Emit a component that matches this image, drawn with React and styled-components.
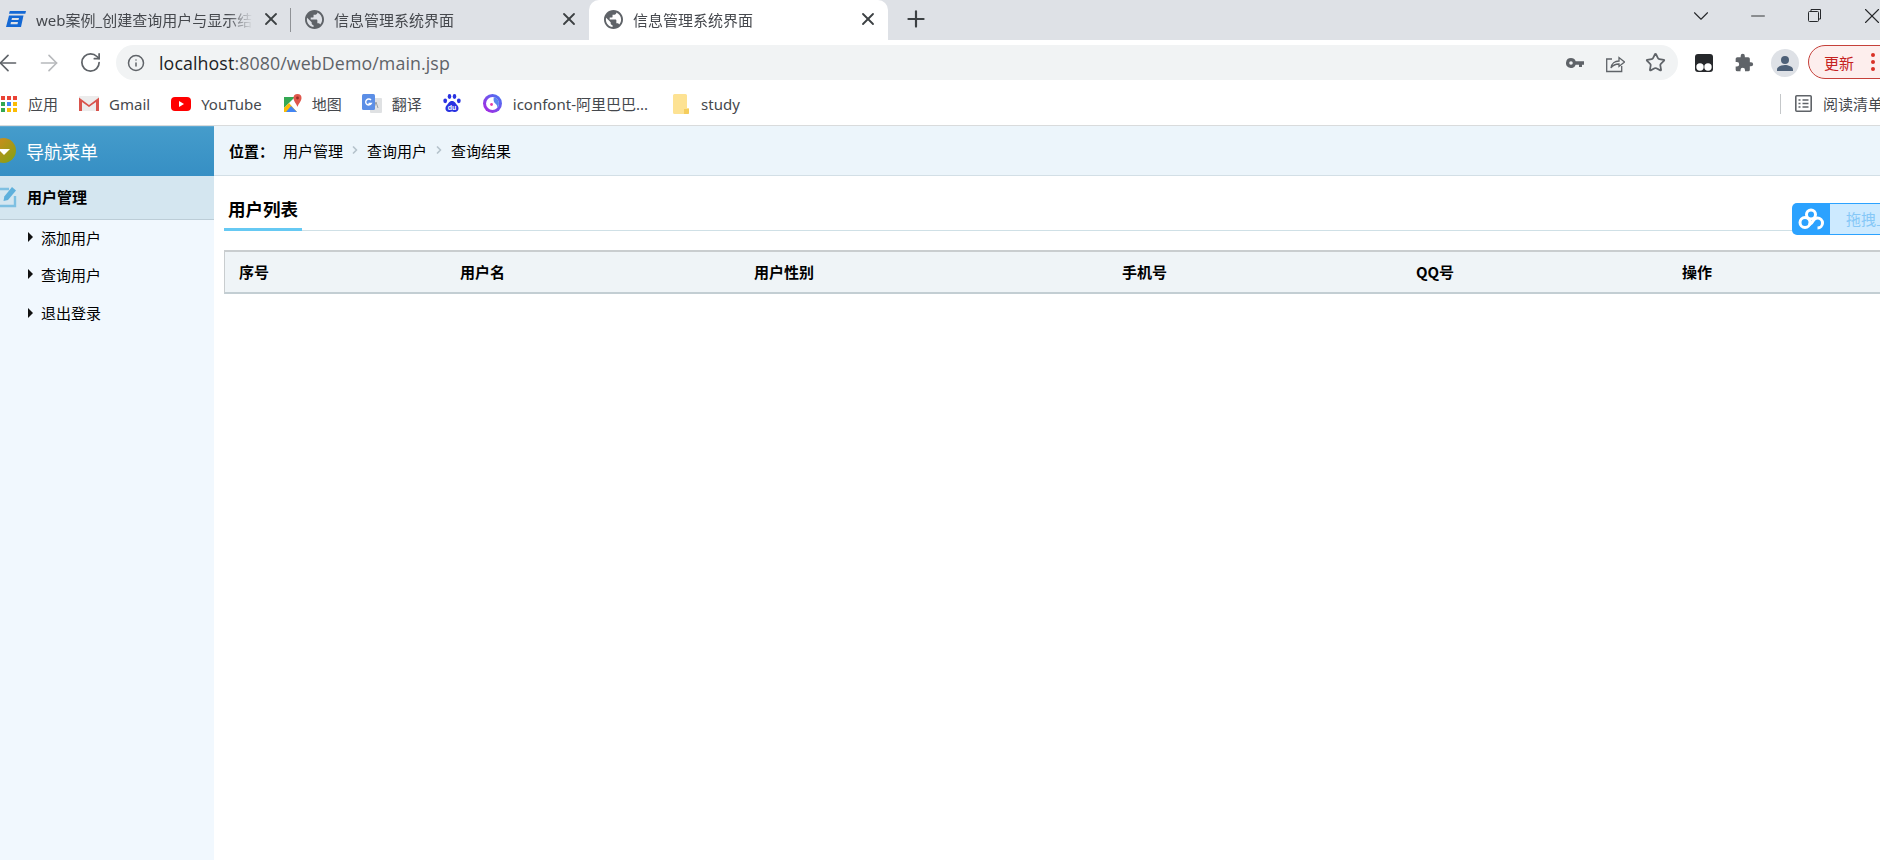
import React from 'react';
import styled, { createGlobalStyle } from 'styled-components';
import { ArrowLeft, ArrowRight, ChevronRight, RotateCw, Info, Star, X, Plus, ChevronDown, Minus } from 'lucide-react';

const GlobalStyle = createGlobalStyle`
  html, body {
    margin: 0;
    padding: 0;
    height: 100%;
    background: #fff;
    overflow: hidden;
  }
  body {
    font-family: 'Noto Sans', 'Noto Sans CJK SC', sans-serif;
  }
`;

const Page = styled.div`
  position: relative;
  width: 1880px;
  height: 860px;
  overflow: hidden;
  display: flex;
  flex-direction: column;
`;

// browser chrome
const TabStrip = styled.div`
  height: 40px;
  flex: none;
  display: flex;
  align-items: stretch;
  background: #dee1e6;
`;

const Tab = styled.div`
  width: ${(p) => p.$width}px;
  flex: none;
  display: flex;
  align-items: center;
  padding: ${(p) => p.$pad};
  box-sizing: border-box;
  font-size: 15px;
  color: #45484d;
  background: ${(p) => (p.$active ? '#fff' : 'transparent')};
  border-radius: ${(p) => (p.$active ? '10px 10px 0 0' : '0')};
`;

const TabIconSlot = styled.span`
  width: ${(p) => p.$w}px;
  flex: none;
  display: flex;
  align-items: center;
`;

const TabClose = styled.span`
  width: 28px;
  flex: none;
  display: flex;
  align-items: center;
  justify-content: flex-end;
  margin-right: ${(p) => p.$right || 0}px;
  color: #3c4043;
`;

const TabTitle = styled.span`
  flex: 1;
  min-width: 0;
  white-space: nowrap;
  overflow: hidden;
  -webkit-mask-image: linear-gradient(90deg, #000 88%, transparent 100%);
  mask-image: linear-gradient(90deg, #000 88%, transparent 100%);
`;

const TabDivider = styled.span`
  width: 1px;
  height: 24px;
  align-self: center;
  flex: none;
  background: #8f9296;
`;

const NewTab = styled.div`
  width: 56px;
  display: flex;
  align-items: center;
  justify-content: center;
  padding-bottom: 2px;
  box-sizing: border-box;
  color: #3c4043;
`;

const StripSpacer = styled.div`
  flex: 1;
`;

const WinButtons = styled.div`
  display: flex;
  align-items: flex-start;
  color: #26282b;
  margin-right: -20px;
`;

const WinButton = styled.span`
  width: 57px;
  height: 31px;
  display: flex;
  justify-content: center;
  align-items: center;
`;

const Toolbar = styled.div`
  height: 45px;
  flex: none;
  display: flex;
  align-items: flex-start;
  padding-top: 5px;
  box-sizing: border-box;
  background: #fff;
`;

const NavButton = styled.span`
  width: ${(p) => p.$w}px;
  height: 35px;
  flex: none;
  display: flex;
  justify-content: center;
  align-items: center;
  color: ${(p) => p.$color || '#5f6368'};
  & > svg {
    flex: none;
  }
`;

const AddressBar = styled.div`
  width: 1562px;
  height: 35px;
  flex: none;
  margin-left: 2px;
  display: flex;
  align-items: center;
  background: #f1f3f4;
  border-radius: 18px;
  padding: 0 3px 0 11px;
  box-sizing: border-box;
  color: #5f6368;
`;

const Url = styled.div`
  flex: 1;
  margin-left: 14px;
  font-family: 'Open Sans', sans-serif;
  font-size: 17.8px;
  color: #5f6368;
  letter-spacing: 0.1px;
`;

const UrlHost = styled.span`
  color: #202124;
`;

const AddressIcon = styled.span`
  width: 40px;
  display: flex;
  justify-content: center;
  align-items: center;
`;

const ExtIcons = styled.div`
  display: flex;
  align-items: center;
  height: 35px;
  margin-left: 13px;
`;

const ExtSlot = styled.span`
  width: ${(p) => p.$w}px;
  display: flex;
  justify-content: center;
  align-items: center;
`;

const UpdatePill = styled.div`
  height: 34px;
  width: 110px;
  flex: none;
  display: flex;
  align-items: center;
  margin-left: 9px;
  padding-left: 15px;
  box-sizing: border-box;
  border: 1px solid #c5403a;
  border-radius: 17px;
  background: #fdeeed;
  color: #c5221f;
  font-size: 15px;
`;

const PillDots = styled.span`
  display: flex;
  flex-direction: column;
  gap: 3px;
  margin-left: 17px;
  & > i {
    width: 4px;
    height: 4px;
    border-radius: 50%;
    background: #d93025;
  }
`;

const BookmarkBar = styled.div`
  height: 41px;
  flex: none;
  display: flex;
  align-items: center;
  padding: 0 0 3px 1px;
  box-sizing: border-box;
  background: #fff;
  font-size: 15px;
  color: #45484d;
  border-bottom: 1px solid #d9dbdc;
`;

const Bookmark = styled.div`
  display: flex;
  align-items: center;
  flex: none;
  margin-right: ${(p) => p.$gap}px;
  & > span {
    margin-left: ${(p) => p.$textGap}px;
    white-space: nowrap;
  }
`;

const BookmarkSpacer = styled.div`
  flex: 1;
`;

const ReadDivider = styled.span`
  width: 1px;
  height: 20px;
  flex: none;
  background: #c4c7c9;
`;

const ReadingList = styled.div`
  width: 85px;
  flex: none;
  display: flex;
  align-items: center;
  margin-left: 14px;
  overflow: hidden;
  white-space: nowrap;
  & > svg {
    flex: none;
  }
  & > span {
    margin-left: 11px;
  }
`;

// the jsp page itself
const Site = styled.div`
  flex: 1;
  display: flex;
  min-height: 0;
  font-family: 'Noto Sans CJK SC', 'Noto Sans', sans-serif;
  color: #000;
`;

const Sidebar = styled.aside`
  width: 214px;
  flex: none;
  background: #f1f8fe;
`;

const NavHeader = styled.div`
  height: 50px;
  display: flex;
  align-items: center;
  box-sizing: border-box;
  padding-bottom: 2px;
  border-top: 1px solid #5fa9d3;
  background: linear-gradient(#459ccb, #368fc4);
  color: #fff;
  font-size: 18px;
`;

const NavBall = styled.span`
  width: 25px;
  height: 25px;
  margin-left: -9px;
  margin-right: 10px;
  flex: none;
  display: flex;
  align-items: center;
  justify-content: center;
  border-radius: 50%;
  background: linear-gradient(135deg, #d8891f, #7fa213);
  &::after {
    content: '';
    margin-top: 3px;
    border-left: 6px solid transparent;
    border-right: 6px solid transparent;
    border-top: 6px solid #fff;
  }
`;

const GroupRow = styled.div`
  height: 44px;
  display: flex;
  align-items: center;
  box-sizing: border-box;
  padding-bottom: 2px;
  background: #d4e6f0;
  border-bottom: 1px solid #bccdd7;
  font-size: 15px;
  font-weight: 700;
  & > svg {
    margin-left: -1px;
    margin-right: 10px;
    flex: none;
  }
`;

const MenuList = styled.ul`
  list-style: none;
  margin: 0;
  padding: 0;
`;

const MenuItem = styled.li`
  height: ${(p) => p.$h}px;
  display: flex;
  align-items: center;
  box-sizing: border-box;
  padding: 0 0 3px 28px;
  font-size: 15px;
  &::before {
    content: '';
    margin-right: 8px;
    border-top: 5px solid transparent;
    border-bottom: 5px solid transparent;
    border-left: 5px solid #111;
  }
`;

const Main = styled.main`
  flex: 1;
  min-width: 0;
`;

const Crumbs = styled.div`
  height: 50px;
  display: flex;
  align-items: center;
  box-sizing: border-box;
  padding: 0 0 1px 15px;
  background: #ecf5fb;
  border-bottom: 1px solid #d3dfe6;
  font-size: 15px;
`;

const CrumbLabel = styled.b`
  width: 54px;
  flex: none;
`;

const CrumbArrow = styled.span`
  width: 24px;
  display: flex;
  justify-content: center;
  color: #b6c3cc;
`;

const SectionHead = styled.div`
  margin: 18px 0 19px 10px;
  height: 36px;
  border-bottom: 1px solid #cfe0e6;
  display: flex;
`;

const SectionTitle = styled.h2`
  margin: 0 0 -2px;
  width: 78px;
  box-sizing: border-box;
  padding-left: 4px;
  height: 37px;
  font-size: 17.5px;
  line-height: 30px;
  font-weight: 700;
  white-space: nowrap;
  border-bottom: 3px solid #66c9f3;
`;

const UserTable = styled.table`
  margin-left: 10px;
  width: 1656px;
  border-collapse: separate;
  border-spacing: 0;
  table-layout: fixed;
  th {
    height: 44px;
    padding: 0 0 2px 15px;
    box-sizing: border-box;
    text-align: left;
    font-size: 15px;
    font-weight: 700;
    background: #eff4f7;
    border-top: 2px solid #c9cdcf;
    border-bottom: 2px solid #c3ced3;
  }
  th:first-child {
    padding-left: 14px;
    border-left: 1px solid #c9cdcf;
  }
`;

const UploadWidget = styled.div`
  position: absolute;
  left: 1792px;
  top: 203px;
  width: 130px;
  height: 32px;
  display: flex;
  border-radius: 5px;
  overflow: hidden;
  background: #2ba2ff;
  font-family: 'Noto Sans CJK SC', sans-serif;
`;

const UploadIcon = styled.span`
  width: 38px;
  flex: none;
  display: flex;
  align-items: center;
  justify-content: center;
`;

const UploadLabel = styled.span`
  flex: 1;
  margin: 1px 0;
  padding-left: 16px;
  background: #cdeaff;
  color: #86c8f7;
  font-size: 15px;
  line-height: 29px;
  white-space: nowrap;
`;

// drawn icons
const Favicon = () => (
  <svg width="20" height="16" viewBox="0 0 20 16" fill="#1468d4">
    <path d="M3.800 0H20l-.7 2.800H3z" />
    <path fillRule="evenodd" d="M3 4.500h14.500L15 16H0zM6 7l-.5 2h7l.5-2zM5 11l-.5 2.300h7L12 11z" />
  </svg>
);

const Globe = () => (
  <svg width="19" height="19" viewBox="2 2 20 20">
    <path
      d="M12 2C6.480 2 2 6.480 2 12s4.480 10 10 10 10-4.480 10-10S17.520 2 12 2zm-1 17.930c-3.950-.490-7-3.850-7-7.930 0-.620.080-1.210.210-1.790L9 15v1c0 1.100.900 2 2 2v1.930zm6.900-2.540c-.260-.810-1-1.390-1.900-1.390h-1v-3c0-.550-.450-1-1-1H8v-2h2c.550 0 1-.450 1-1V7h2c1.100 0 2-.900 2-2v-.410c2.930 1.190 5 4.060 5 7.410 0 2.080-.800 3.970-2.100 5.390z"
      fill="#5f6368"
    />
  </svg>
);

const KeyIcon = () => (
  <svg width="18" height="10" viewBox="0 0 18 10">
    <path d="M5 0a5 5 0 0 1 4.700 3.300H18v3.400h-2V9h-3V6.700H9.700A5 5 0 1 1 5 0zm0 3.200a1.800 1.800 0 1 0 0 3.600 1.800 1.800 0 0 0 0-3.600z" fill="#5f6368" />
  </svg>
);

const ShareIcon = () => (
  <svg width="20" height="20" viewBox="0 0 20 20" fill="none" stroke="#5f6368" strokeWidth="1.300">
    <path d="M7 6H1.700v12.500h15V13" />
    <path d="M6 15c.5-4.500 4-7 8-7V4.500L19.500 9 14 13.500V11c-3 0-6 1-8 4z" />
  </svg>
);

const GhostIcon = () => (
  <svg width="18" height="18" viewBox="0 0 18 18">
    <rect width="18" height="18" rx="3" fill="#26282b" />
    <circle cx="5" cy="13" r="3.700" fill="#fff" />
    <circle cx="13" cy="13" r="3.700" fill="#fff" />
  </svg>
);

const PuzzleIcon = () => (
  <svg width="20" height="20" viewBox="0 0 24 24">
    <path d="M20.500 11H19V7a2 2 0 0 0-2-2h-4V3.500a2.500 2.500 0 0 0-5 0V5H4a2 2 0 0 0-2 2v3.800h1.500a2.700 2.700 0 0 1 0 5.400H2V20a2 2 0 0 0 2 2h3.800v-1.500a2.700 2.700 0 0 1 5.400 0V22H17a2 2 0 0 0 2-2v-4h1.500a2.500 2.500 0 0 0 0-5z" fill="#5f6368" />
  </svg>
);

const Avatar = () => (
  <svg width="28" height="28" viewBox="0 0 28 28">
    <circle cx="14" cy="14" r="14" fill="#dee1e6" />
    <circle cx="14" cy="11" r="4" fill="#4d6078" />
    <path d="M6 20.500c0-3 5-4.500 8-4.500s8 1.500 8 4.500V22H6z" fill="#4d6078" />
  </svg>
);

const AppsGrid = () => {
  const colors = ['#ea4335', '#ea4335', '#ea4335', '#34a853', '#4285f4', '#fbbc04', '#34a853', '#fbbc04', '#fbbc04'];
  return (
    <svg width="16" height="16" viewBox="0 0 16 16">
      {colors.map((c, i) => (
        <rect key={i} x={(i % 3) * 6} y={Math.floor(i / 3) * 6} width="4" height="4" fill={c} />
      ))}
    </svg>
  );
};

const GmailIcon = () => (
  <svg width="20" height="15" viewBox="0 0 20 15">
    <rect width="20" height="15" rx="1" fill="#ececec" />
    <path d="M0 15V1.500L10 9l10-7.500V15h-3V6l-7 5-7-5v9z" fill="#d9534c" />
  </svg>
);

const YoutubeIcon = () => (
  <svg width="20" height="14" viewBox="0 0 20 14">
    <rect width="20" height="14" rx="4" fill="#f00" />
    <path d="M8 4l5 3-5 3z" fill="#fff" />
  </svg>
);

const MapsIcon = () => (
  <svg width="19" height="20" viewBox="0 0 19 20">
    <path d="M1 3h11l-11 11z" fill="#34a853" />
    <path d="M1 14l5-5 8 9H1z" fill="#fbbc04" />
    <path d="M3 18l5-6 6 6z" fill="#4285f4" />
    <path d="M14.500 0a4 4 0 0 1 4 4c0 3-4 7-4 9-.3-2-4-6-4-9a4 4 0 0 1 4-4z" fill="#e0574c" />
    <circle cx="14.500" cy="4" r="1.400" fill="#9c2c25" />
  </svg>
);

const TranslateIcon = () => (
  <svg width="20" height="20" viewBox="0 0 20 20">
    <rect x="8" y="4" width="12" height="15" rx="1" fill="#dfe1e3" />
    <path d="M14 8l-2 6M14 8l2 6" stroke="#9aa0a6" strokeWidth="1" />
    <rect width="13" height="16" rx="1.500" fill="#5b8ee6" />
    <path d="M9 6a3 3 0 1 0 .3 3.500H6.500" fill="none" stroke="#fff" strokeWidth="1.400" />
  </svg>
);

const BaiduIcon = () => (
  <svg width="18" height="19" viewBox="0 0 18 19" fill="#2932e1">
    <ellipse cx="6.500" cy="2.500" rx="1.800" ry="2.400" />
    <ellipse cx="11.500" cy="2.500" rx="1.800" ry="2.400" />
    <ellipse cx="2.200" cy="6.800" rx="1.900" ry="2.400" />
    <ellipse cx="15.800" cy="6.800" rx="1.900" ry="2.400" />
    <path d="M9 7c3 0 3.500 2.500 5.500 4.500 2 2.500 1 6.500-2.500 6.500-1.500 0-2-.5-3-.5s-1.500.5-3 .5C2.500 18 1.500 14 3.500 11.500 5.500 9.500 6 7 9 7z" />
    <text x="9" y="16" fontSize="7" fontWeight="700" fill="#fff" textAnchor="middle" fontFamily="Liberation Sans, sans-serif">du</text>
  </svg>
);

const IconfontIcon = () => (
  <svg width="19" height="19" viewBox="0 0 20 20">
    <defs>
      <linearGradient id="ifg" x1="0" y1="1" x2="1" y2="0">
        <stop offset="0" stopColor="#b11fe0" />
        <stop offset="1" stopColor="#3f7cf5" />
      </linearGradient>
    </defs>
    <circle cx="10" cy="10" r="10" fill="url(#ifg)" />
    <circle cx="10" cy="10" r="6.800" fill="#fff" />
    <path d="M11.500 3.400a6.800 6.800 0 0 1 3.500 11.200c.5-2.500-1-3.500-2.500-5-1.200-1.500-1.800-3.500-1-6.200z" fill="#5a86ee" />
    <circle cx="9" cy="11" r="1.500" fill="#e83ea8" />
  </svg>
);

const FolderIcon = () => (
  <svg width="16" height="20" viewBox="0 0 16 20">
    <path d="M1.500 0h11A1.500 1.500 0 0 1 14 1.500V14h2v4.500a1.500 1.500 0 0 1-1.500 1.500h-13A1.500 1.500 0 0 1 0 18.500v-17A1.500 1.500 0 0 1 1.500 0z" fill="#fde293" />
    <path d="M11 15h5v4a1 1 0 0 1-1 1h-4z" fill="#f5cd5c" />
  </svg>
);

const ReadingIcon = () => (
  <svg width="17" height="17" viewBox="0 0 17 17" fill="none" stroke="#5f6368" strokeWidth="1.600">
    <rect x=".8" y=".8" width="15.400" height="15.400" rx="1" />
    <path d="M3.500 5h2M7.500 5h6M3.500 8.500h2M7.500 8.500h6M3.500 12h2M7.500 12h6" />
  </svg>
);

const EditIcon = () => (
  <svg width="18" height="22" viewBox="0 0 18 22" fill="none">
    <path d="M-4 3h14M16 10v10H-4" stroke="#7ec0e2" strokeWidth="2.400" />
    <path d="M13 1l4 3.500L9 14l-4.500 1 .8-4.500z" fill="#5eb0dc" />
  </svg>
);

const CloudIcon = () => (
  <svg width="26" height="22" viewBox="0 0 26 22" fill="none" stroke="#fff" strokeWidth="3">
    <circle cx="13" cy="6.500" r="4.500" />
    <circle cx="7" cy="14.500" r="5" />
    <path d="M11 17c2-1 3-2 4-4 1-1.500 2.500-3 4.500-3a5 5 0 0 1 0 10" />
  </svg>
);

const menuItems = [
  { label: '添加用户', h: 37 },
  { label: '查询用户', h: 37 },
  { label: '退出登录', h: 40 },
];

const columns = [
  { label: '序号', w: 221 },
  { label: '用户名', w: 294 },
  { label: '用户性别', w: 368 },
  { label: '手机号', w: 294 },
  { label: 'QQ号', w: 266 },
  { label: '操作', w: 213 },
];

export default function App() {
  return (
    <Page>
      <GlobalStyle />
      <TabStrip>
        <Tab $width={290} $pad="0 12px 2px 6px">
          <TabIconSlot $w={30}><Favicon /></TabIconSlot>
          <TabTitle>web案例_创建查询用户与显示结果</TabTitle>
          <TabClose $right={-3}><X size={20} strokeWidth={2.2} /></TabClose>
        </Tab>
        <TabDivider />
        <Tab $width={298} $pad="0 10px 2px 14px">
          <TabIconSlot $w={29}><Globe /></TabIconSlot>
          <TabTitle>信息管理系统界面</TabTitle>
          <TabClose><X size={20} strokeWidth={2.2} /></TabClose>
        </Tab>
        <Tab $active $width={299} $pad="0 10px 2px 15px">
          <TabIconSlot $w={29}><Globe /></TabIconSlot>
          <TabTitle>信息管理系统界面</TabTitle>
          <TabClose><X size={20} strokeWidth={2.2} /></TabClose>
        </Tab>
        <NewTab>
          <Plus size={26} strokeWidth={2} />
        </NewTab>
        <StripSpacer />
        <WinButtons>
          <WinButton><ChevronDown size={26} strokeWidth={1} /></WinButton>
          <WinButton><Minus size={22} strokeWidth={1} /></WinButton>
          <WinButton>
            <svg width="13" height="13" viewBox="0 0 13 13" fill="none" stroke="#26282b">
              <rect x=".5" y="2.500" width="10" height="10" rx="1" />
              <path d="M3 2.500V.5h9.500V10h-2" />
            </svg>
          </WinButton>
          <WinButton><X size={26} strokeWidth={1} /></WinButton>
        </WinButtons>
      </TabStrip>

      <Toolbar>
        <NavButton $w={16}><ArrowLeft size={26} strokeWidth={1.5} /></NavButton>
        <NavButton $w={66} $color="#b7b9bc"><ArrowRight size={26} strokeWidth={1.5} /></NavButton>
        <NavButton $w={16}><RotateCw size={23} strokeWidth={1.8} /></NavButton>
        <NavButton $w={16} />
        <AddressBar>
          <Info size={18} strokeWidth={2} />
          <Url><UrlHost>localhost</UrlHost>:8080/webDemo/main.jsp</Url>
          <AddressIcon><KeyIcon /></AddressIcon>
          <AddressIcon><ShareIcon /></AddressIcon>
          <AddressIcon><Star size={21} strokeWidth={2} /></AddressIcon>
        </AddressBar>
        <ExtIcons>
          <ExtSlot $w={26}><GhostIcon /></ExtSlot>
          <ExtSlot $w={54}><PuzzleIcon /></ExtSlot>
          <ExtSlot $w={28}><Avatar /></ExtSlot>
        </ExtIcons>
        <UpdatePill>
          更新
          <PillDots><i /><i /><i /></PillDots>
        </UpdatePill>
      </Toolbar>

      <BookmarkBar>
        <Bookmark $gap={21} $textGap={11}><AppsGrid /><span>应用</span></Bookmark>
        <Bookmark $gap={21} $textGap={10}><GmailIcon /><span>Gmail</span></Bookmark>
        <Bookmark $gap={21} $textGap={10}><YoutubeIcon /><span>YouTube</span></Bookmark>
        <Bookmark $gap={20} $textGap={10}><MapsIcon /><span>地图</span></Bookmark>
        <Bookmark $gap={21} $textGap={10}><TranslateIcon /><span>翻译</span></Bookmark>
        <Bookmark $gap={22} $textGap={0}><BaiduIcon /></Bookmark>
        <Bookmark $gap={25} $textGap={11}><IconfontIcon /><span>iconfont-阿里巴巴...</span></Bookmark>
        <Bookmark $gap={0} $textGap={12}><FolderIcon /><span>study</span></Bookmark>
        <BookmarkSpacer />
        <ReadDivider />
        <ReadingList><ReadingIcon /><span>阅读清单</span></ReadingList>
      </BookmarkBar>

      <Site>
        <Sidebar>
          <NavHeader><NavBall />导航菜单</NavHeader>
          <GroupRow><EditIcon />用户管理</GroupRow>
          <MenuList>
            {menuItems.map((item) => (
              <MenuItem key={item.label} $h={item.h}>{item.label}</MenuItem>
            ))}
          </MenuList>
        </Sidebar>
        <Main>
          <Crumbs>
            <CrumbLabel>位置：</CrumbLabel>
            用户管理
            <CrumbArrow><ChevronRight size={12} strokeWidth={3.5} /></CrumbArrow>
            查询用户
            <CrumbArrow><ChevronRight size={12} strokeWidth={3.5} /></CrumbArrow>
            查询结果
          </Crumbs>
          <SectionHead>
            <SectionTitle>用户列表</SectionTitle>
          </SectionHead>
          <UserTable>
            <colgroup>
              {columns.map((c) => <col key={c.label} style={{ width: c.w }} />)}
            </colgroup>
            <thead>
              <tr>
                {columns.map((c) => <th key={c.label}>{c.label}</th>)}
              </tr>
            </thead>
          </UserTable>
        </Main>
      </Site>

      <UploadWidget>
        <UploadIcon><CloudIcon /></UploadIcon>
        <UploadLabel>拖拽上传</UploadLabel>
      </UploadWidget>
    </Page>
  );
}
